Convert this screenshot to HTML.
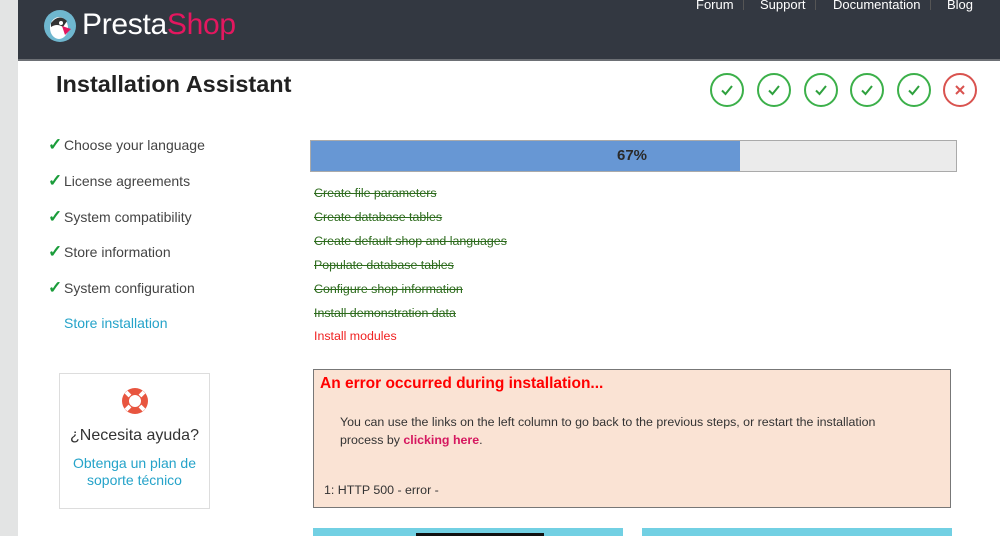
<!DOCTYPE html>
<html><head><meta charset="utf-8"><style>
*{margin:0;padding:0;box-sizing:border-box}
body{width:1000px;height:536px;overflow:hidden;background:#fff;font-family:"Liberation Sans",Arial,sans-serif;position:relative}
.strip{position:absolute;left:0;top:0;width:18px;height:536px;background:#e3e4e4}
.hdr{position:absolute;left:18px;top:0;width:982px;height:61px;background:#333841;border-bottom:2px solid #6d7075}
.abs{position:absolute}
.nav{top:-3px;color:#fff;font-size:13px}
.sep{top:0;width:1px;height:10px;background:#555}
.circ{position:absolute;top:73px;width:34px;height:34px;border-radius:50%;border:2px solid #3cb04a;display:flex;align-items:center;justify-content:center}
.circ.x{border-color:#d9534f}
.side{position:absolute;left:48px;font-size:14px;color:#444}
.side b{color:#1a9c3a;font-weight:bold;display:inline-block;width:16px;font-size:17px}
.task{position:absolute;left:314px;font-size:12.4px;color:#2d6b1d;text-decoration:line-through}
</style></head><body>
<div class="strip"></div>
<div class="hdr"></div>
<svg class="abs" style="left:43px;top:9px" width="34" height="34" viewBox="0 0 34 34"><circle cx="17" cy="17" r="16" fill="#6fb7cf"/><ellipse cx="16" cy="19" rx="9" ry="11" fill="#fff"/><path d="M8 14 Q16 4 24 12 L20 18 Q14 14 8 18Z" fill="#333"/><path d="M19 17 L28 20 L22 26Z" fill="#e4175f"/><circle cx="18" cy="14" r="2" fill="#fff"/></svg>
<div class="abs" style="left:82px;top:8px;font-size:30px;color:#fff;letter-spacing:-0.3px">Presta<span style="color:#e4175f">Shop</span></div>
<div class="abs nav" style="left:696px">Forum</div>
<div class="abs sep" style="left:743px"></div>
<div class="abs nav" style="left:760px">Support</div>
<div class="abs sep" style="left:815px"></div>
<div class="abs nav" style="left:833px">Documentation</div>
<div class="abs sep" style="left:930px"></div>
<div class="abs nav" style="left:947px">Blog</div>
<div class="abs" style="left:56px;top:71px;font-size:23.5px;font-weight:bold;color:#222">Installation Assistant</div>
<div class="circ" style="left:710px"><svg width="14" height="14" viewBox="0 0 14 14"><path d="M2 7.5 L5.5 11 L12 3" stroke="#2fa13e" stroke-width="2" fill="none"/></svg></div>
<div class="circ" style="left:757px"><svg width="14" height="14" viewBox="0 0 14 14"><path d="M2 7.5 L5.5 11 L12 3" stroke="#2fa13e" stroke-width="2" fill="none"/></svg></div>
<div class="circ" style="left:804px"><svg width="14" height="14" viewBox="0 0 14 14"><path d="M2 7.5 L5.5 11 L12 3" stroke="#2fa13e" stroke-width="2" fill="none"/></svg></div>
<div class="circ" style="left:850px"><svg width="14" height="14" viewBox="0 0 14 14"><path d="M2 7.5 L5.5 11 L12 3" stroke="#2fa13e" stroke-width="2" fill="none"/></svg></div>
<div class="circ" style="left:897px"><svg width="14" height="14" viewBox="0 0 14 14"><path d="M2 7.5 L5.5 11 L12 3" stroke="#2fa13e" stroke-width="2" fill="none"/></svg></div>
<div class="circ x" style="left:943px"><svg width="14" height="14" viewBox="0 0 14 14"><path d="M3 3 L11 11 M11 3 L3 11" stroke="#d9534f" stroke-width="2" fill="none"/></svg></div>

<div class="side" style="top:135px"><b>✓</b>Choose your language</div>
<div class="side" style="top:171px"><b>✓</b>License agreements</div>
<div class="side" style="top:207px"><b>✓</b>System compatibility</div>
<div class="side" style="top:242px"><b>✓</b>Store information</div>
<div class="side" style="top:278px"><b>✓</b>System configuration</div>
<div class="side" style="top:315px;left:64px;color:#25a3c9">Store installation</div>

<div class="abs" style="left:59px;top:373px;width:151px;height:136px;border:1px solid #ddd;text-align:center">
<svg style="margin-top:12px" width="30" height="30" viewBox="0 0 30 30"><circle cx="15" cy="15" r="13" fill="#e8553f"/><circle cx="15" cy="15" r="6" fill="#fff"/><g stroke="#fff" stroke-width="4"><path d="M6 6 L10 10 M24 6 L20 10 M6 24 L10 20 M24 24 L20 20"/></g></svg>
<div style="font-size:16px;color:#333;margin-top:6px">¿Necesita ayuda?</div>
<div style="font-size:14px;color:#25a3c9;margin-top:10px;line-height:17px">Obtenga un plan de<br>soporte técnico</div>
</div>

<div class="abs" style="left:310px;top:140px;width:647px;height:32px;background:#ebebeb;border:1px solid #aaa"></div>
<div class="abs" style="left:311px;top:141px;width:429px;height:30px;background:#6797d4"></div>
<div class="abs" style="left:617px;top:147px;font-size:15px;font-weight:bold;color:#2a2a2a">67%</div>

<div class="task" style="top:186px">Create file parameters</div>
<div class="task" style="top:210px">Create database tables</div>
<div class="task" style="top:234px">Create default shop and languages</div>
<div class="task" style="top:258px">Populate database tables</div>
<div class="task" style="top:282px">Configure shop information</div>
<div class="task" style="top:306px">Install demonstration data</div>
<div class="task" style="top:329px;color:#f02020;text-decoration:none">Install modules</div>

<div class="abs" style="left:313px;top:369px;width:638px;height:139px;background:#fae3d4;border:1px solid #777">
<div style="position:absolute;left:6px;top:5px;font-size:15.5px;font-weight:bold;color:#f00">An error occurred during installation...</div>
<div style="position:absolute;left:26px;top:43px;font-size:12.4px;color:#333;line-height:18px;width:570px">You can use the links on the left column to go back to the previous steps, or restart the installation process by <b style="color:#d5175f">clicking here</b>.</div>
<div style="position:absolute;left:10px;top:113px;font-size:12.4px;color:#333">1: HTTP 500 - error -</div>
</div>
<div class="abs" style="left:313px;top:528px;width:310px;height:8px;background:#72d0e3"></div>
<div class="abs" style="left:416px;top:533px;width:128px;height:3px;background:#111"></div>
<div class="abs" style="left:642px;top:528px;width:310px;height:8px;background:#72d0e3"></div>
</body></html>
